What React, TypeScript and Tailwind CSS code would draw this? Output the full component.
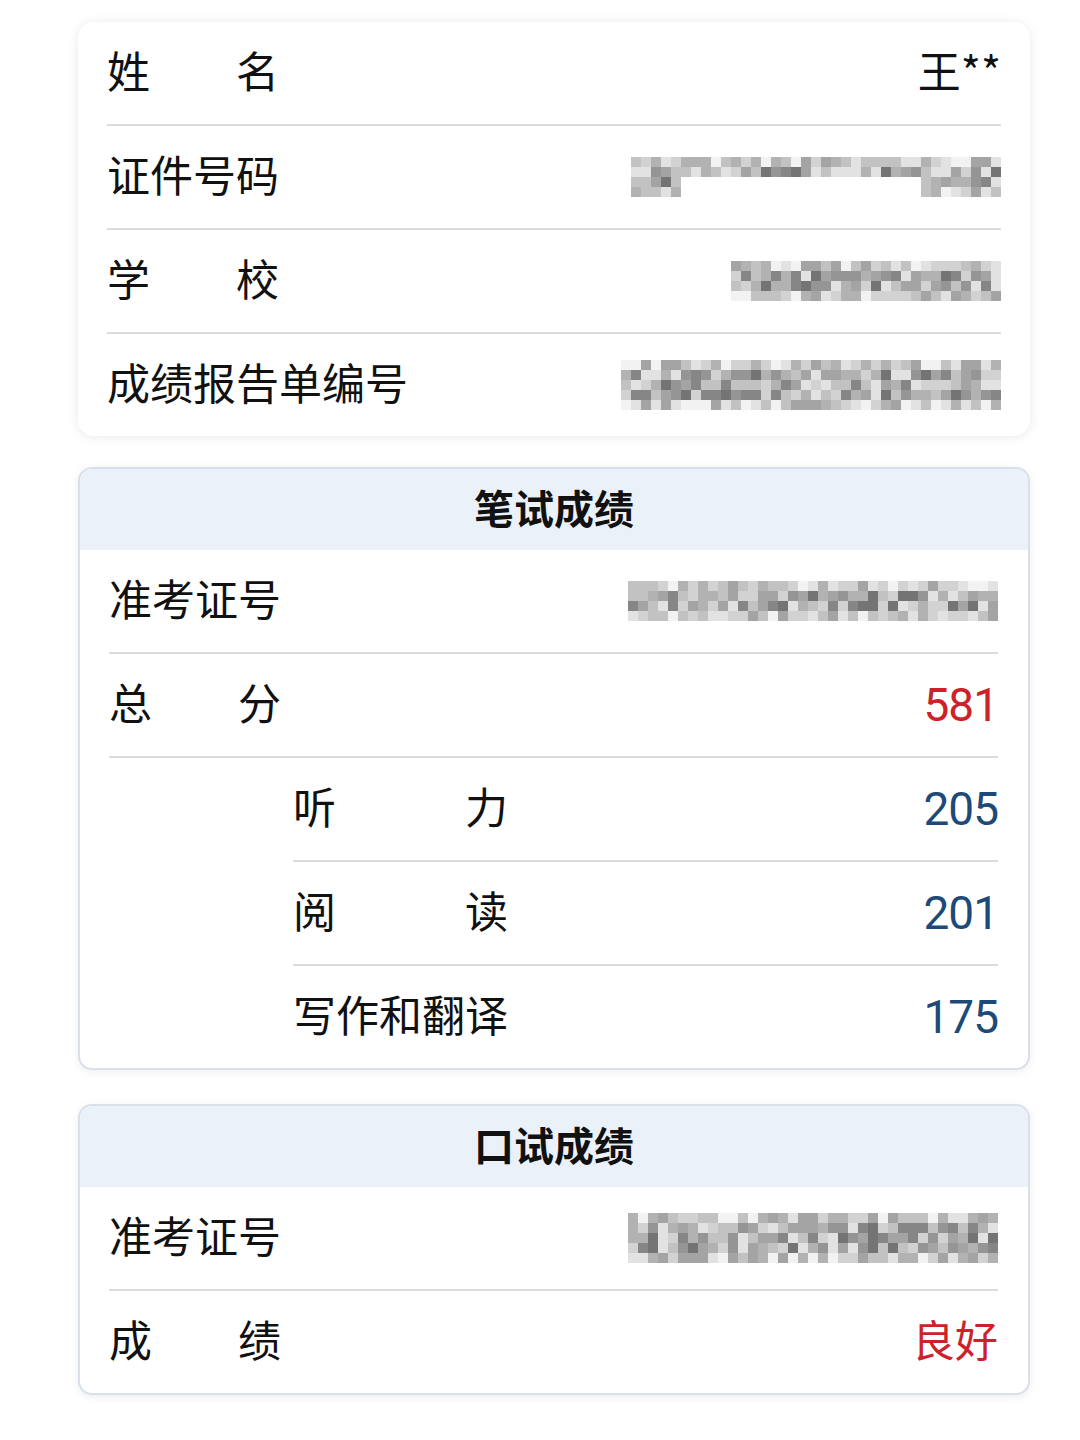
import React from "react";

const CJK = "font-['Noto_Sans_CJK_SC','Noto_Sans',sans-serif]";
const NUM = "font-['Roboto','Noto_Sans_CJK_SC',sans-serif]";

const grays = ["#f2f2f2", "#e2e2e2", "#d2d2d2", "#c2c2c2", "#b2b2b2", "#a4a4a4", "#959595", "#868686", "#747474"];

function rng(seed: number) {
  let s = seed;
  return () => {
    s = (s * 1103515245 + 12345) % 2147483648;
    return s / 2147483648;
  };
}

// pixelated (redacted) value, drawn as a mosaic of 10px cells
function Mosaic({ cols, rows, seed, ranges }: { cols: number; rows: number; seed: number; ranges?: [number, number][][] }) {
  const r = rng(seed);
  const cells: React.ReactNode[] = [];
  for (let y = 0; y < rows; y++) {
    for (let x = 0; x < cols; x++) {
      const v = r();
      const spans = ranges ? ranges[y] : [[0, cols] as [number, number]];
      const on = spans.some(([a, b]) => x >= a && x < b);
      if (!on) continue;
      const edge = y === 0 || y === rows - 1;
      const idx = Math.min(grays.length - 1, Math.floor(edge ? v * 6 : 1 + v * 8));
      cells.push(<rect key={`${x}-${y}`} x={x * 10} y={y * 10} width={10} height={10} fill={grays[idx]} />);
    }
  }
  return (
    <svg width={cols * 10} height={rows * 10} shapeRendering="crispEdges" className="block">
      {cells}
    </svg>
  );
}

function Label({ text, width }: { text: string; width: string }) {
  const chars = text.split(" ");
  if (chars.length === 1) return <span className="whitespace-nowrap pb-[8px]">{text}</span>;
  return (
    <span className={`flex justify-between pb-[8px] ${width}`}>
      {chars.map((c) => (
        <span key={c}>{c}</span>
      ))}
    </span>
  );
}

function Row({ label, children, last, indent }: { label: string; children: React.ReactNode; last?: boolean; indent?: boolean }) {
  return (
    <div className={indent ? "pl-[184px]" : ""}>
      <div className="flex h-[102px] items-center justify-between text-[43px] text-[#111]">
        <Label text={label} width={indent ? "w-[215px]" : "w-[172px]"} />
        <div className="flex items-center">{children}</div>
      </div>
      {!last && <div className="h-[2px] bg-[#dcdcdc]" />}
    </div>
  );
}

function ScoreCard({ title, children }: { title: string; children: React.ReactNode }) {
  return (
    <div className="overflow-hidden rounded-[14px] border-2 border-[#d9e0ea] bg-white shadow-[0_2px_10px_rgba(0,0,0,0.07)]">
      <div className="flex h-[81px] items-center justify-center bg-[#ebf1f9] pb-[6px] text-[40px] font-bold text-[#111]">{title}</div>
      <div className="pl-[29px] pr-[30px]">{children}</div>
    </div>
  );
}

function Score({ value, red }: { value: string; red?: boolean }) {
  return <span className={`${NUM} text-[46px] tracking-[-1px] ${red ? "text-[#cf2129]" : "text-[#1d4a78]"}`}>{value}</span>;
}

export default function App() {
  return (
    <div className={`min-h-[1440px] w-[1080px] bg-white pl-[78px] pr-[50px] pt-[22px] ${CJK}`}>
      <div className="flex flex-col gap-[31px]">
        <div className="rounded-[16px] bg-white pl-[29px] pr-[29px] shadow-[0_1px_12px_rgba(0,0,0,0.09)]">
          <Row label="姓 名">
            <span className="mb-[8px]">王**</span>
          </Row>
          <Row label="证件号码">
            <Mosaic cols={37} rows={4} seed={11} ranges={[[[0, 37]], [[0, 37]], [[0, 5], [29, 37]], [[0, 5], [29, 37]]]} />
          </Row>
          <Row label="学 校">
            <Mosaic cols={27} rows={4} seed={29} />
          </Row>
          <Row label="成绩报告单编号" last>
            <Mosaic cols={38} rows={5} seed={47} />
          </Row>
        </div>

        <ScoreCard title="笔试成绩">
          <Row label="准考证号">
            <Mosaic cols={37} rows={4} seed={73} />
          </Row>
          <Row label="总 分">
            <Score value="581" red />
          </Row>
          <Row label="听 力" indent>
            <Score value="205" />
          </Row>
          <Row label="阅 读" indent>
            <Score value="201" />
          </Row>
          <Row label="写作和翻译" indent last>
            <Score value="175" />
          </Row>
        </ScoreCard>

        <div className="mt-[3px]">
          <ScoreCard title="口试成绩">
            <Row label="准考证号">
              <Mosaic cols={37} rows={5} seed={91} />
            </Row>
            <Row label="成 绩" last>
              <span className="pb-[8px] text-[#cf2129]">良好</span>
            </Row>
          </ScoreCard>
        </div>
      </div>
    </div>
  );
}
